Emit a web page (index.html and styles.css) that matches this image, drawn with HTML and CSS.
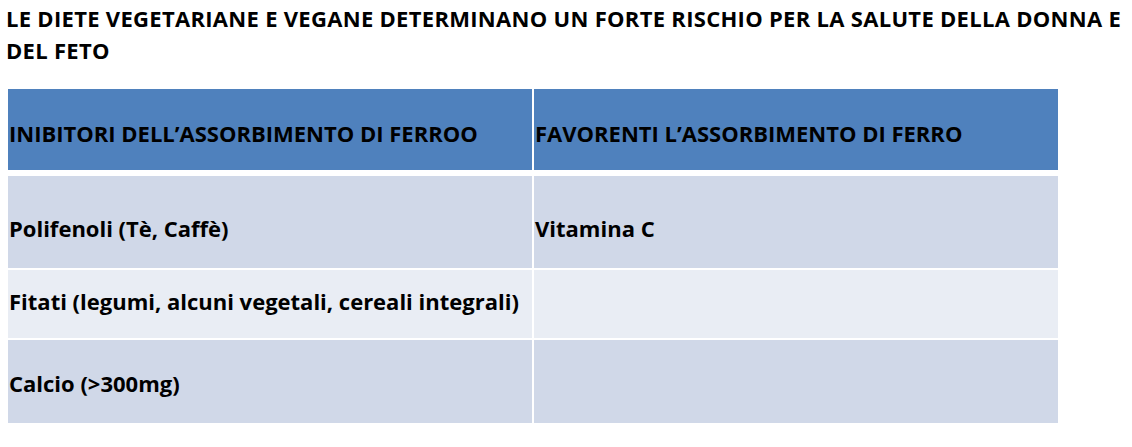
FILE: index.html
```
<!DOCTYPE html>
<html lang="it">
<head>
<meta charset="utf-8">
<link rel="stylesheet" href="styles.css">
</head>
<body>
<h1 class="title">LE DIETE VEGETARIANE E VEGANE DETERMINANO UN FORTE RISCHIO PER LA SALUTE DELLA DONNA E DEL FETO</h1>
<div class="table">
  <div class="cell head">INIBITORI DELL’ASSORBIMENTO DI FERROO</div>
  <div class="cell head">FAVORENTI L’ASSORBIMENTO DI FERRO</div>
  <div class="cell r1">Polifenoli (Tè, Caffè)</div>
  <div class="cell r1">Vitamina C</div>
  <div class="cell r2">Fitati (legumi, alcuni vegetali, cereali integrali)</div>
  <div class="cell r2"></div>
  <div class="cell r3">Calcio (&gt;300mg)</div>
  <div class="cell r3"></div>
</div>
</body>
</html>
```
FILE: styles.css
```
html, body {
  margin: 0;
  padding: 0;
  background: #ffffff;
}
body {
  width: 1132px;
  height: 447px;
  overflow: hidden;
}
.title {
  margin: 0;
  padding: 2px 0 0 6px;
  font-family: "Open Sans", "Liberation Sans", sans-serif;
  font-weight: 700;
  font-size: 22px;
  letter-spacing: 0.3px;
  line-height: 32px;
  color: #000;
  width: 1126px;
}
.table {
  margin: 23px 0 0 8px;
  width: 1050px;
  display: grid;
  grid-template-columns: 524px 524px;
  grid-template-rows: 85px 92px 68px 83px;
  column-gap: 2px;
  row-gap: 2px;
}
.cell {
  font-family: "Open Sans", "Liberation Sans", sans-serif;
  font-weight: 700;
  font-size: 22px;
  line-height: 30px;
  color: #000;
  padding-left: 1px;
  white-space: nowrap;
}
.head {
  background: #4f81bd;
  margin-bottom: 4px;
  padding-top: 29px;
}
.r1 {
  background: #d0d8e8;
  padding-top: 37px;
}
.r2 {
  background: #e9edf4;
  padding-top: 16px;
}
.r3 {
  background: #d0d8e8;
  padding-top: 28px;
}
```
